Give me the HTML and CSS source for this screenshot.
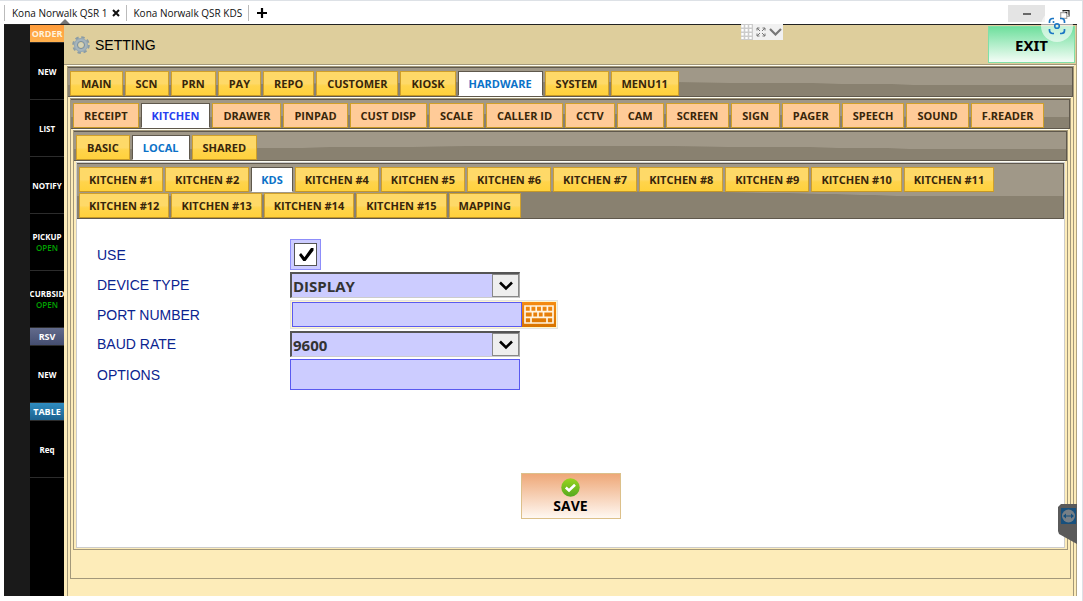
FILE: index.html
```
<!DOCTYPE html>
<html lang="en">
<head>
<meta charset="utf-8">
<title>Kona Norwalk QSR 1</title>
<link rel="stylesheet" href="styles.css">
</head>
<body>
<header class="browser-bar">
  <div class="session"><span>Kona Norwalk QSR 1</span>
    <button class="icon-button" aria-label="Close tab"><svg width="8" height="8" viewBox="0 0 8 8"><path d="M1 1l6 6M7 1L1 7" stroke="#111" stroke-width="2"/></svg></button>
  </div>
  <div class="session"><span>Kona Norwalk QSR KDS</span></div>
  <div class="session"><button class="icon-button" aria-label="New tab"><svg width="10" height="10" viewBox="0 0 10 10"><path d="M5 0v10M0 5h10" stroke="#000" stroke-width="2.2"/></svg></button></div>
  <div class="window-controls">
    <button class="minimize" aria-label="Minimize"><svg width="8" height="2"><path d="M0 1h8" stroke="#333" stroke-width="1.4"/></svg></button>
    <button class="restore" aria-label="Restore"><svg width="10" height="9" viewBox="0 0 10 9"><path d="M3 3V.7h6v5.6H7M.7 2.7h6v5.6h-6z" fill="none" stroke="#222" stroke-width="1.2"/></svg></button>
  </div>
  <svg class="pointer" width="10" height="5" viewBox="0 0 10 5"><path d="M5 0l5 5H0z" fill="#777"/></svg>
</header>

<div class="app">
  <nav class="sidebar">
    <h2 class="group order">ORDER</h2>
    <button class="side-item">NEW</button>
    <button class="side-item">LIST</button>
    <button class="side-item">NOTIFY</button>
    <button class="side-item">PICKUP<span class="open">OPEN</span></button>
    <button class="side-item">CURBSID<span class="open">OPEN</span></button>
    <h2 class="group rsv">RSV</h2>
    <button class="side-item">NEW</button>
    <h2 class="group table">TABLE</h2>
    <button class="side-item">Req</button>
  </nav>

  <main class="main">
    <div class="title-bar">
      <svg width="18" height="18" viewBox="0 0 18 18"><circle cx="9" cy="9" r="7.6" fill="none" stroke="#8b9ca5" stroke-width="2.4" stroke-dasharray="3.4 2.57"/><circle cx="9" cy="9" r="5" fill="none" stroke="#a6b5bd" stroke-width="4.2"/><circle cx="9" cy="9" r="3.6" fill="none" stroke="#7f929d"/><circle cx="9" cy="9" r="6.5" fill="none" stroke="#92a3ac" stroke-width=".8"/><circle cx="9" cy="9" r="2.3" fill="#d5d4b8"/></svg>
      <h1>SETTING</h1>
      <button class="exit">EXIT</button>
    </div>

    <div class="panel level-1">
      <div class="tabs">
        <button class="tab">MAIN</button><button class="tab">SCN</button><button class="tab">PRN</button><button class="tab">PAY</button><button class="tab">REPO</button><button class="tab">CUSTOMER</button><button class="tab">KIOSK</button><button class="tab active">HARDWARE</button><button class="tab">SYSTEM</button><button class="tab">MENU11</button>
      </div>
      <div class="panel level-2">
        <div class="tabs peach">
          <button class="tab">RECEIPT</button><button class="tab active">KITCHEN</button><button class="tab">DRAWER</button><button class="tab">PINPAD</button><button class="tab">CUST DISP</button><button class="tab">SCALE</button><button class="tab">CALLER ID</button><button class="tab">CCTV</button><button class="tab">CAM</button><button class="tab">SCREEN</button><button class="tab">SIGN</button><button class="tab">PAGER</button><button class="tab">SPEECH</button><button class="tab">SOUND</button><button class="tab">F.READER</button>
        </div>
        <div class="panel level-3">
          <div class="tabs">
            <button class="tab">BASIC</button><button class="tab active">LOCAL</button><button class="tab">SHARED</button>
          </div>
          <div class="panel level-4">
            <div class="tabs">
              <button class="tab">KITCHEN #1</button><button class="tab">KITCHEN #2</button><button class="tab active">KDS</button><button class="tab">KITCHEN #4</button><button class="tab">KITCHEN #5</button><button class="tab">KITCHEN #6</button><button class="tab">KITCHEN #7</button><button class="tab">KITCHEN #8</button><button class="tab">KITCHEN #9</button><button class="tab">KITCHEN #10</button><button class="tab">KITCHEN #11</button><button class="tab">KITCHEN #12</button><button class="tab">KITCHEN #13</button><button class="tab">KITCHEN #14</button><button class="tab">KITCHEN #15</button><button class="tab">MAPPING</button>
            </div>
            <form class="form">
              <div class="fields">
                <label for="use">USE</label>
                <span class="check"><input type="checkbox" id="use" checked><svg width="18" height="18" viewBox="0 0 18 18"><path d="M2 9l2-2 3.5 4.2L14 2h2.5v2.5L8.5 15H6.3z" fill="#000"/></svg></span>
                <label for="device">DEVICE TYPE</label>
                <span class="combo"><select id="device"><option>DISPLAY</option></select><span class="arrow"><svg width="14" height="10" viewBox="0 0 14 10"><path d="M1 1.5l6 6 6-6" fill="none" stroke="#000" stroke-width="2.6"/></svg></span></span>
                <label for="port">PORT NUMBER</label>
                <span class="port"><input type="text" id="port"><button type="button" class="keyboard" aria-label="Keyboard"><svg width="30" height="19" viewBox="0 0 30 19"><path d="M1 1h28v17H1zM1 6.7h28M1 12.3h28M6.6 1v5.7M12.2 1v5.7M17.8 1v5.7M23.4 1v5.7M8.5 6.7v5.6M14 6.7v5.6M19.5 6.7v5.6M7 12.3V18M23 12.3V18" fill="none" stroke="#fff4df" stroke-width="1.7"/></svg></button></span>
                <label for="baud">BAUD RATE</label>
                <span class="combo"><select id="baud"><option>9600</option></select><span class="arrow"><svg width="14" height="10" viewBox="0 0 14 10"><path d="M1 1.5l6 6 6-6" fill="none" stroke="#000" stroke-width="2.6"/></svg></span></span>
                <label for="options">OPTIONS</label>
                <input type="text" id="options" class="options">
              </div>
              <button type="button" class="save"><svg width="19" height="19" viewBox="0 0 19 19"><defs><linearGradient id="green" x2="0" y2="1"><stop stop-color="#98d41f"/><stop offset="1" stop-color="#55a91f"/></linearGradient></defs><circle cx="9.5" cy="9.5" r="9.2" fill="url(#green)"/><path d="M4.8 9.5l3.2 3 6-5.8" fill="none" stroke="#fff" stroke-width="2.6"/></svg>SAVE</button>
            </form>
          </div>
        </div>
      </div>
    </div>
  </main>
</div>

<div class="remote-bar">
  <svg width="12" height="16" viewBox="0 0 12 16"><path d="M0 0h12v16H0z" fill="#ccc"/><path d="M1.5 1v14M5.5 1v14M9.5 1v14" stroke="#fff" stroke-width="2.4" stroke-dasharray="2.4 1.6"/></svg>
  <svg width="10" height="10" viewBox="0 0 10 10"><path d="M1 3.5V1h2.5M6.5 1H9v2.5M9 6.5V9H6.5M3.5 9H1V6.5M1 1l3 3M9 1L6 4M9 9L6 6M1 9l3-3" fill="none" stroke="#777"/></svg>
  <svg width="13" height="8" viewBox="0 0 13 8"><path d="M1 1l5.5 5.5L12 1" fill="none" stroke="#777" stroke-width="2.2"/></svg>
</div>
<div class="lens"><svg width="18" height="18" viewBox="0 0 18 18"><path d="M1.5 6V4.5a3 3 0 0 1 3-3H6M12 1.5h1.5a3 3 0 0 1 3 3V6M16.500 12v1.500a3 3 0 0 1-3 3H12M6 16.500H4.500a3 3 0 0 1-3-3V12" fill="none" stroke="#1b76c4" stroke-width="1.700"/><circle cx="9" cy="9" r="2.300" fill="none" stroke="#1b76c4" stroke-width="1.600"/><circle cx="5.500" cy="5" r="1" fill="#1b76c4"/></svg></div>
<svg class="side-tool" width="19" height="40" viewBox="0 0 19 40"><path d="M3 0h16v40L1 30l-1-3V3z" fill="#5a5a5a"/><path d="M3 4h15v16H3z" fill="#17507d"/><circle cx="10.500" cy="12" r="6.500" fill="#777f86"/><path d="M5 12l3-2.500v2h5v-2l3 2.500-3 2.500v-2H8v2z" fill="#17507d"/></svg>
</body>
</html>
```
FILE: styles.css
```
* { box-sizing: border-box; }
html, body { height: 100%; margin: 0; }
body {
  display: flex; flex-direction: column; overflow: hidden; position: relative;
  padding: 0 5px 5px 4px; background: #fff;
  border-top: 1px solid #dde1e6; border-right: 1px solid #dde1e6;
  font-family: "Open Sans", "Noto Sans", sans-serif;
}
button { font: inherit; padding: 0; border: 0; background: none; color: inherit; }
h1, h2 { margin: 0; }
svg { display: block; flex: none; }

.browser-bar { position: relative; display: flex; height: 23px; flex: none; padding-top: 4px; }
.session { display: flex; align-items: center; gap: 4px; height: 16px; padding: 0 6px 0 7px; border-left: 1px solid #bbb; font-size: 10px; color: #111; white-space: nowrap; }
.session:nth-child(3) { padding-left: 8px; }
.icon-button { display: flex; }
.window-controls { display: flex; margin-left: auto; gap: 15px; }
.minimize { display: flex; align-items: center; justify-content: center; width: 37px; height: 17px; background: #e4e4e4; }
.restore { display: flex; align-items: center; padding-right: 7px; }
.pointer { position: absolute; left: 56px; bottom: 0; }

.app { flex: 1; min-height: 0; display: flex; border-top: 1px solid #222; background: #1a1a1a; padding-left: 26px; }
.sidebar { width: 34px; flex: none; background: #000; color: #fff; font-size: 8px; font-weight: bold; overflow: hidden; }
.group { height: 18px; font-size: 9px; line-height: 18px; text-align: center; border-bottom: 1px solid #2c2c2c; }
.order { background: linear-gradient(#ff9c3c, #ffb04d); color: #fff2dd; }
.rsv { background: linear-gradient(#626b8c, #454e70); }
.table { background: linear-gradient(#2f8cc0, #1c628f); }
.side-item { display: flex; flex-direction: column; align-items: center; justify-content: center; width: 100%; height: 57px; border-bottom: 1px solid #2c2c2c; line-height: 11px; }
.open { color: #00a000; font-weight: 600; }

.main { flex: 1; min-width: 0; display: flex; flex-direction: column; background: #fdecb9; border-right: 1px solid #b0a380; }
.title-bar { flex: none; display: flex; align-items: center; gap: 5px; height: 40px; padding: 0 1px 0 8px; background: #dece9c; border-bottom: 1px solid #a3987a; }
.title-bar h1 { font: 14px "Liberation Sans", Arial, sans-serif; color: #000; }
.exit { width: 87px; height: 37px; margin-left: auto; border: 1px solid #80e0a8; background: linear-gradient(#6fdf9d, #f4fdf6); font: bold 15px "Noto Sans", sans-serif; color: #000; }

.panel { display: flex; flex-direction: column; flex: 1; min-height: 0; border: 1px solid #a3987a; box-shadow: 0 -1px #fffef2; background: #fdecb9; }
.level-1 { margin: 1px 2px 0 3px; border-bottom: 0; }
.level-2 { margin: 1px 2px 17px 2px; }
.level-3 { margin: 1px 2px 28px 2px; }
.level-4 { margin: 1px 2px 1px 2px; border-color: #ccc; }
.tabs {
  flex: none; display: flex; flex-wrap: wrap; gap: 1px 2px; padding: 3px 2px 0; min-height: 30px;
  border: 1px solid #5f584c; border-width: 1px 1px 1px 0;
  background: radial-gradient(ellipse 60% 50% at 50% 100%, #898170 98%, transparent 100%), linear-gradient(#a09888 0 60%, #898170 60% 100%);
}
.tab { height: 25px; padding: 0 10px; border: 1px solid #d0a02a; border-bottom-color: #c59827; background: linear-gradient(#fed968 0 50%, #ffd44c 60%, #ffd13c); font-size: 11px; font-weight: bold; line-height: 23px; color: #38260a; white-space: nowrap; }
.peach .tab { background: #ffcb98; font-weight: 660; }
.level-4 .tabs { padding-right: 60px; }
.level-4 .tab { padding: 0 9px; }
.tabs .active { background: #fff; color: #0b72c8; border-color: #5f584c #5f584c #fff; }
.peach .active { background: #fff; color: #263ff0; }

.form { flex: 1; display: flex; flex-direction: column; align-items: center; padding: 20px; background: #fff; }
.fields { align-self: stretch; display: grid; grid-template-columns: 193px minmax(0, 1fr); gap: 2px 0; align-items: center; justify-items: start; }
.fields label { font: 14px "Liberation Sans", Arial, sans-serif; color: #0b248f; }
.check { position: relative; display: flex; padding: 3px; border: 1px solid #8d8dfa; background: #ccf; }
.check input { appearance: none; width: 23px; height: 23px; margin: 0; background: #fff; border: 1px solid #555; }
.check svg { position: absolute; left: 6px; top: 6px; pointer-events: none; }
.combo { position: relative; width: 230px; }
.combo select { display: block; appearance: none; width: 100%; height: 26px; padding: 0 1px; border: 2px solid #555; border-right: 1px solid #aaa; border-bottom: 1px solid #ccc; border-radius: 0; background: #ccf; font: bold 15px "Open Sans", "Noto Sans", sans-serif; color: #333; }
.arrow { position: absolute; top: 2px; right: 1px; bottom: 1px; width: 27px; display: flex; align-items: center; justify-content: center; background: #eee; border: 1px solid #888; pointer-events: none; }
.port { display: flex; border: 1px solid #e3e3e3; background: #fff6cc; padding: 1px; }
.port input { width: 230px; height: 25px; border: 1px solid #5a5af0; background: #ccf; }
.keyboard { display: flex; align-items: center; justify-content: center; width: 34px; background: linear-gradient(#f58b12, #d87400); }
.options { width: 230px; height: 31px; border: 1px solid #5a5af0; background: #ccf; }
.save { display: flex; flex-direction: column; align-items: center; width: 100px; height: 46px; margin-top: 83px; padding-top: 4px; border: 1px solid #dcc08a; background: linear-gradient(#eea878, #fff8f2); font-size: 14px; font-weight: bold; line-height: 18px; color: #000; }

.remote-bar { position: absolute; left: 741px; top: 23px; display: flex; align-items: center; gap: 3px; width: 42px; height: 16px; background: #f1f1f1; }
.lens { position: absolute; right: 9px; top: 9px; display: flex; align-items: center; justify-content: center; width: 32px; height: 32px; border-radius: 50%; background: #ffffff99; }
.side-tool { position: absolute; right: 5px; top: 503px; }
```
